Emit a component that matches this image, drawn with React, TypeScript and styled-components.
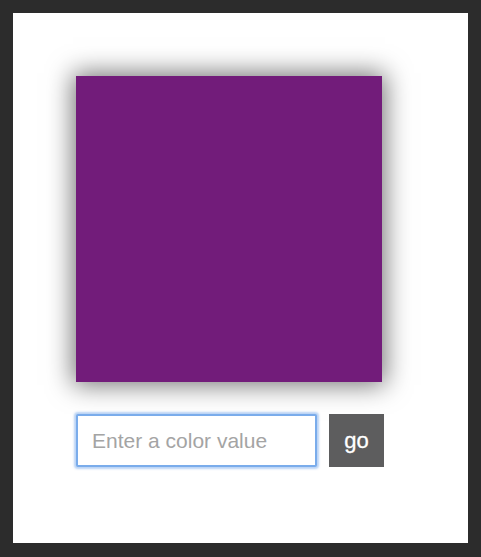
import React, { useState } from 'react';
import styled, { createGlobalStyle } from 'styled-components';

const GlobalStyle = createGlobalStyle`
  html, body {
    margin: 0;
    padding: 0;
    background: #2c2c2c;
  }
  * {
    box-sizing: border-box;
  }
`;

const Frame = styled.div`
  width: 481px;
  height: 557px;
  border: 13px solid #2c2c2c;
  border-bottom-width: 14px;
  background: #ffffff;
  padding: 63px 0 0 63px;
  font-family: 'Liberation Sans', Arial, sans-serif;
`;

const Swatch = styled.div<{ color: string }>`
  width: 306px;
  height: 306px;
  background-color: ${(props) => props.color};
  box-shadow: 0 0 24px 3px rgba(0, 0, 0, 0.55);
`;

const Form = styled.form`
  display: flex;
  gap: 12px;
  margin-top: 32px;
`;

const ColorInput = styled.input`
  width: 241px;
  height: 53px;
  border: 2px solid #7aaceb;
  box-shadow: 0 0 2px 2px rgba(120, 170, 235, 0.5);
  border-radius: 2px;
  padding: 0 0 0 14px;
  font-family: inherit;
  font-size: 21px;
  color: #333;
  outline: none;

  &::placeholder {
    color: #a4a4a4;
  }
`;

const GoButton = styled.button`
  width: 55px;
  height: 53px;
  border: none;
  background-color: #5d5d5e;
  color: #ffffff;
  font-family: inherit;
  font-size: 22px;
  padding: 0;
  cursor: pointer;
  -webkit-text-stroke: 0.3px #ffffff;
`;

export default function App() {
  const [value, setValue] = useState('');
  const [color, setColor] = useState('#721c7a');

  return (
    <>
      <GlobalStyle />
      <Frame>
        <Swatch color={color} />
        <Form
          onSubmit={(e) => {
            e.preventDefault();
            if (value.trim()) setColor(value.trim());
          }}
        >
          <ColorInput
            type="text"
            placeholder="Enter a color value"
            value={value}
            onChange={(e) => setValue(e.target.value)}
          />
          <GoButton type="submit">go</GoButton>
        </Form>
      </Frame>
    </>
  );
}
